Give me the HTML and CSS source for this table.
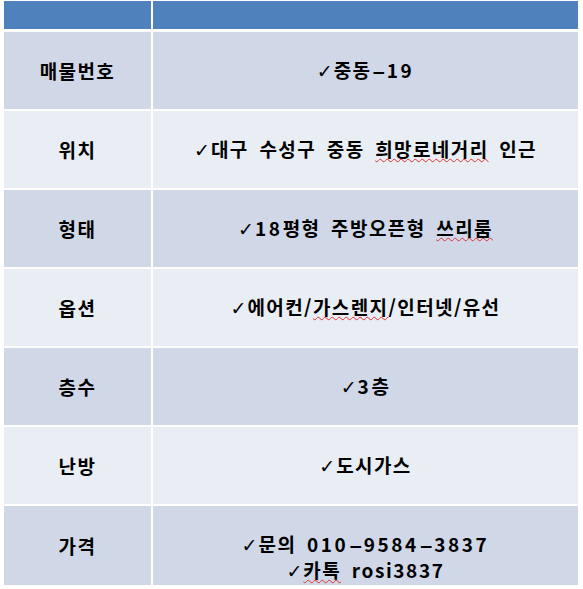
FILE: index.html
```html
<!DOCTYPE html>
<html lang="ko">
<head>
<meta charset="utf-8">
<link rel="stylesheet" href="styles.css">
</head>
<body>
<div class="table">
  <div class="cell head"></div>
  <div class="cell head"></div>

  <div class="cell odd label"><span>매물번호</span></div>
  <div class="cell odd value"><span><span class="chk">✓</span>중동<span class="num"><span class="dash">−</span>19</span></span></div>

  <div class="cell even label"><span>위치</span></div>
  <div class="cell even value"><span><span class="chk">✓</span>대구 수성구 중동 <span class="spell">희망로네거리</span> 인근</span></div>

  <div class="cell odd label"><span>형태</span></div>
  <div class="cell odd value"><span><span class="chk">✓</span><span class="num">18</span>평형 주방오픈형 <span class="spell">쓰리룸</span></span></div>

  <div class="cell even label"><span>옵션</span></div>
  <div class="cell even value"><span><span class="chk">✓</span>에어컨/<span class="spell">가스렌지</span>/인터넷/유선</span></div>

  <div class="cell odd label"><span>층수</span></div>
  <div class="cell odd value"><span><span class="chk">✓</span><span class="num">3</span>층</span></div>

  <div class="cell even label"><span>난방</span></div>
  <div class="cell even value"><span><span class="chk">✓</span>도시가스</span></div>

  <div class="cell odd label"><span>가격</span></div>
  <div class="cell odd value multi">
    <div class="line"><span class="chk">✓</span>문의 <span class="num">010<span class="dash">−</span>9584<span class="dash">−</span>3837</span></div>
    <div class="line"><span class="chk">✓</span><span class="spell">카톡</span> <span class="num2">rosi3837</span></div>
  </div>
</div>
</body>
</html>
```

FILE: styles.css
```css
html, body {
  margin: 0;
  padding: 0;
  background: #ffffff;
}

body {
  padding: 1px 0 0 4px;
  font-family: "Noto Sans CJK KR", "Noto Sans", sans-serif;
  color: #000000;
}

.table {
  width: 574px;
  display: grid;
  grid-template-columns: 147px 1fr;
  grid-template-rows: 29px repeat(6, 77px) 79px;
  column-gap: 2px;
  row-gap: 2px;
  background: #ffffff;
}

.cell {
  display: flex;
  align-items: center;
  justify-content: center;
  font-size: 19px;
  font-weight: 700;
  line-height: 23px;
  letter-spacing: 1.4px;
  white-space: nowrap;
}

.head {
  background: #4f81bd;
  margin-bottom: 1px;
}

.odd {
  background: #d0d8e8;
}

.even {
  background: #e9edf4;
}

.value {
  word-spacing: 4px;
}

.chk {
  font-family: "DejaVu Sans", sans-serif;
  font-weight: 400;
  font-size: 19px;
  letter-spacing: 0;
  margin-right: 1px;
}

.num {
  letter-spacing: 2.6px;
}

.dash {
  font-family: "DejaVu Sans", sans-serif;
  font-weight: 700;
  font-size: 17px;
  letter-spacing: 0;
  margin-right: 1px;
}

.num2 {
  letter-spacing: 1.6px;
}

.spell {
  text-decoration: underline wavy #e03030;
  text-decoration-thickness: 1px;
  text-underline-offset: 1px;
}

.multi {
  flex-direction: column;
  padding-top: 24px;
  box-sizing: border-box;
}

.line {
  display: block;
}
```
